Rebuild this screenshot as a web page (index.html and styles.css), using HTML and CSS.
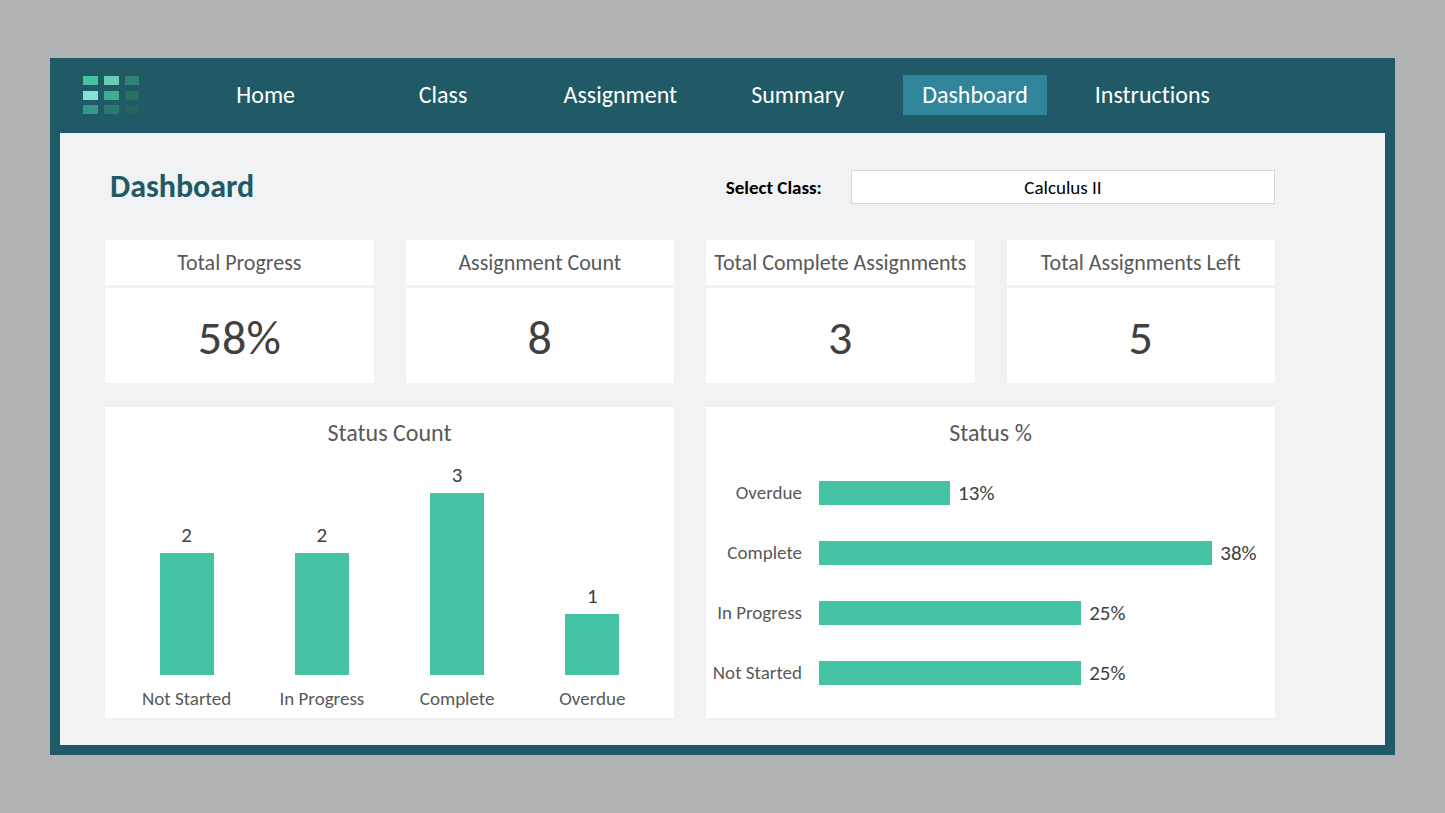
FILE: index.html
```html
<!DOCTYPE html>
<html lang="en">
<head>
<meta charset="utf-8">
<meta name="viewport" content="width=device-width, initial-scale=1">
<title>Dashboard</title>
<link rel="stylesheet" href="styles.css">
</head>
<body>
<div class="frame">
  <header class="topbar">
    <svg class="logo" width="56" height="40" viewBox="0 0 56 40" aria-hidden="true">
      <rect x="0" y="1" width="15" height="9" fill="#45c1a4"/>
      <rect x="21" y="1" width="15" height="9" fill="#6accb4"/>
      <rect x="42" y="1" width="14" height="9" fill="#2f8477"/>
      <rect x="0" y="16" width="15" height="9" fill="#84e3d2"/>
      <rect x="21" y="16" width="15" height="9" fill="#3fac97"/>
      <rect x="42" y="16" width="14" height="9" fill="#267061"/>
      <rect x="0" y="30" width="15" height="9" fill="#37968a"/>
      <rect x="21" y="30" width="15" height="9" fill="#287b6b"/>
      <rect x="42" y="30" width="14" height="9" fill="#24655a"/>
    </svg>
    <nav class="nav">
      <a class="nav-link" href="#home">Home</a>
      <a class="nav-link" href="#class">Class</a>
      <a class="nav-link" href="#assignment">Assignment</a>
      <a class="nav-link" href="#summary">Summary</a>
      <a class="nav-link nav-link-active" href="#dashboard" aria-current="page">Dashboard</a>
      <a class="nav-link" href="#instructions">Instructions</a>
    </nav>
  </header>
  <main class="content">
    <div class="heading">
      <h1 class="title">Dashboard</h1>
      <label class="select-label" for="class-select">Select Class:</label>
      <select class="select" id="class-select"><option>Calculus II</option></select>
    </div>
    <div class="grid">
      <section class="stat"><h2 class="stat-name">Total Progress</h2><p class="stat-value">58%</p></section>
      <section class="stat"><h2 class="stat-name">Assignment Count</h2><p class="stat-value">8</p></section>
      <section class="stat"><h2 class="stat-name">Total Complete Assignments</h2><p class="stat-value">3</p></section>
      <section class="stat"><h2 class="stat-name">Total Assignments Left</h2><p class="stat-value">5</p></section>
      <section class="chart">
        <h2 class="chart-title">Status Count</h2>
        <div class="columns">
          <div class="column"><div class="plot"><span class="value">2</span><div class="column-bar" style="height:55%"></div></div><span class="label">Not Started</span></div>
          <div class="column"><div class="plot"><span class="value">2</span><div class="column-bar" style="height:55%"></div></div><span class="label">In Progress</span></div>
          <div class="column"><div class="plot"><span class="value">3</span><div class="column-bar" style="height:82.5%"></div></div><span class="label">Complete</span></div>
          <div class="column"><div class="plot"><span class="value">1</span><div class="column-bar" style="height:27.5%"></div></div><span class="label">Overdue</span></div>
        </div>
      </section>
      <section class="chart">
        <h2 class="chart-title">Status %</h2>
        <div class="rows">
          <div class="row"><span class="label">Overdue</span><div class="track"><div class="row-bar" style="width:28.75%"></div><span class="value">13%</span></div></div>
          <div class="row"><span class="label">Complete</span><div class="track"><div class="row-bar" style="width:86.25%"></div><span class="value">38%</span></div></div>
          <div class="row"><span class="label">In Progress</span><div class="track"><div class="row-bar" style="width:57.5%"></div><span class="value">25%</span></div></div>
          <div class="row"><span class="label">Not Started</span><div class="track"><div class="row-bar" style="width:57.5%"></div><span class="value">25%</span></div></div>
        </div>
      </section>
    </div>
  </main>
</div>
</body>
</html>
```
FILE: styles.css
```css
* { box-sizing: border-box; }
body {
  margin: 0;
  padding: 58px 50px;
  background: #b0b2b4;
  color: #404040;
  font-family: Carlito, Calibri, Lato, sans-serif;
  font-variant-ligatures: none;
}
h1, h2, p { margin: 0; font-weight: 400; }
.frame { padding: 0 10px 10px; background: #205a66; }
.topbar {
  display: flex;
  align-items: center;
  gap: 38px;
  height: 75px;
  padding: 0 144px 2px 23px;
}
.logo { flex: none; }
.nav { display: grid; flex: 1; grid-template-columns: repeat(6, 1fr); }
.nav-link {
  display: block;
  margin: 0 17px;
  color: #fff;
  font-size: 24px;
  line-height: 40px;
  text-align: center;
  text-decoration: none;
}
.nav-link-active { background: #30859a; }
.content { padding: 37px 110px 27px 45px; background: #f0f2f4; }
.heading { display: flex; align-items: center; margin-bottom: 36px; }
.title {
  flex: 1;
  padding-left: 5px;
  color: #205a66;
  font-size: 32px;
  font-weight: 700;
  line-height: 34px;
}
.select-label { margin-right: 29px; color: #000; font-size: 19px; font-weight: 700; }
.select {
  width: 36.25%;
  height: 34px;
  border: 1px solid #d4d6d8;
  border-radius: 0;
  background: #fff;
  color: #000;
  font: inherit;
  font-size: 19px;
  appearance: none;
  text-align: center;
  text-align-last: center;
}
.grid { display: grid; grid-template-columns: repeat(4, minmax(0, 1fr)); gap: 24px 32px; }
.stat { display: grid; gap: 3px; text-align: center; }
.stat-name {
  background: #fff;
  color: #595959;
  font-size: 22px;
  line-height: 45px;
  white-space: nowrap;
}
.stat-value { padding-top: 4px; background: #fff; font-size: 48px; line-height: 91px; }
.chart { grid-column: span 2; background: #fff; }
.chart-title {
  padding-top: 11px;
  color: #595959;
  font-size: 24px;
  line-height: 30px;
  text-align: center;
}
.label { color: #595959; font-size: 19px; line-height: 24px; }
.value { font-size: 21px; line-height: 24px; }
.columns {
  display: grid;
  grid-template-columns: repeat(4, 1fr);
  padding: 6px 14px 7px;
  text-align: center;
}
.column { display: grid; gap: 12px; }
.plot {
  display: flex;
  flex-direction: column;
  justify-content: flex-end;
  align-items: center;
  gap: 6px;
  height: 221px;
}
.column-bar { width: 40%; background: #45c1a4; }
.rows { display: grid; gap: 36px; padding-top: 33px; }
.row { display: grid; grid-template-columns: 96px 1fr; align-items: center; gap: 17px; }
.row .label { text-align: right; white-space: nowrap; }
.track { display: flex; align-items: center; gap: 8px; }
.row-bar { flex: none; height: 24px; background: #45c1a4; }
```
